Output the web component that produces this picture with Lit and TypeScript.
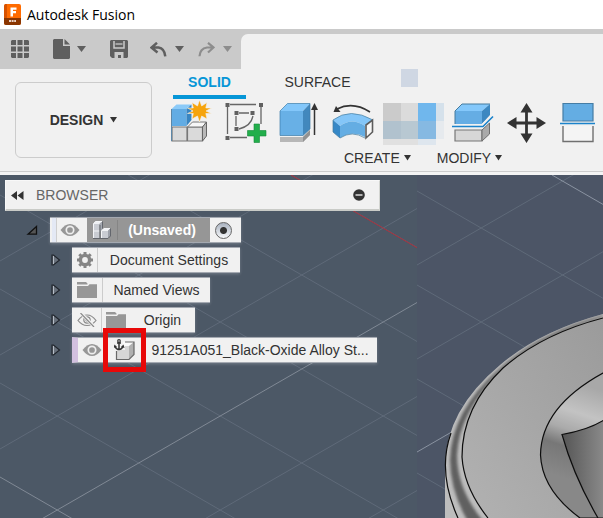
import { LitElement, html, css, svg, nothing } from "lit";
import { customElement, property } from "lit/decorators.js";

const icons: Record<string, unknown> = {
  logo: svg`<svg width="17" height="21" viewBox="0 0 17 21"><rect width="17" height="21" rx="2" fill="#ff6b00"/><path d="M1 0h2v14H0V2z" fill="#d75200"/><path d="M0 14h17v5a2 2 0 0 1-2 2H2a2 2 0 0 1-2-2z" fill="#8a3500"/><path d="M6.500 3.500h6v2.200H9V7h3v2.200H9v3.300H6.500z" fill="#fff"/><path d="M5 17h7" stroke="#e9d2c4" stroke-width="2" stroke-dasharray="2 .6"/></svg>`,
  grid: svg`<svg width="18" height="18" viewBox="0 0 18 18" fill="#5f5f5f"><path d="M1 0h4v5H0V1zM6.500 0h5v5h-5zM13 0h4l1 1v4h-5zM0 6.500h5v5H0zM6.500 6.500h5v5h-5zM13 6.500h5v5h-5zM0 13h5v5H1l-1-1zM6.500 13h5v5h-5zM13 13h5v4l-1 1h-4z"/></svg>`,
  file: svg`<svg width="17" height="20" viewBox="0 0 17 20" fill="#5f5f5f"><path d="M1 0h9v7h7v12l-1 1H1l-1-1V1z"/><path d="M11.500 0L17 5.500h-5.500z"/></svg>`,
  save: svg`<svg width="18" height="18" viewBox="0 0 18 18"><path d="M1 0h16l1 1v16l-1 1H2l-2-2V1z" fill="#5f5f5f"/><path d="M4 1v7h10V1" fill="none" stroke="#cacaca" stroke-width="1.500"/><path d="M5.500 4h7" stroke="#cacaca" stroke-width="1.300"/><path d="M4.500 18v-6h9v6h-2.500v-3H8v3z" fill="#cacaca"/></svg>`,
  undo: svg`<svg width="17" height="15" viewBox="0 0 17 15" fill="none" stroke="#5f5f5f" stroke-width="2.500"><path d="M7 .8L1.500 5.500l6 5M2 5.500h6.500q6 1 6.800 8.800"/></svg>`,
  redo: svg`<svg width="17" height="15" viewBox="0 0 17 15" fill="none" stroke="#8d8d8d" stroke-width="2.200"><path d="M10 .8l5.500 4.700-5.500 5M15 5.500H9Q2 6.500 1.500 14.300"/></svg>`,
  component: svg`<svg width="45" height="42" viewBox="0 0 45 42"><path d="M2 24h15v14H2zM17.500 24h15v14h-15z" fill="#dadada" stroke="#777" stroke-width="1.200"/><path d="M17.500 24l5-5h14l-4 5z" fill="#f7f7f7" stroke="#777"/><path d="M32.500 24l4-5v14l-4 5z" fill="#b9b9b9" stroke="#666"/><path d="M1.500 6h15v17h-15z" fill="#62ace4"/><path d="M1.500 6l5-4.500h15L16.500 6z" fill="#8bcaf8"/><path d="M16.500 6l5-4.500V17l-5 6z" fill="#3885c2"/><path d="M1.500 6v32" stroke="#5c87a8"/><path d="M31-4l2.200 6 5.300-3.500-1.200 5.500H43L37.500 7l5.500 2.500h-5.700l1.200 5.500-5.300-3L31 18l-2-6-5.500 3 1.300-5.500H19L24.500 7 19 4h5.800l-1.300-5.500L29 2z" transform="translate(-1.500 1)" fill="#f6a40c" stroke="#f1f1f1" stroke-width=".6"/></svg>`,
  sketch: svg`<svg width="45" height="42" viewBox="0 0 45 42"><g fill="none" stroke="#666" stroke-width="1.300"><path d="M6 1.500h26M3.500 4v27M6 34.500h17M37 4v17M15 10h10M12 13v10M15 26q12-3 14-13"/></g><path d="M1.500 0h4v4h-4zM35 0h4v4h-4zM1.500 33h4v4h-4zM10.500 8h4v4h-4zM26.500 8h4v4h-4zM10.500 24h4v4h-4z" fill="#606060"/><path d="M30 21h5.500v6.500H42V33h-6.500v6.500H30V33h-6.500v-5.500H30z" fill="#22ae4b" stroke="#14893a" stroke-width=".6"/></svg>`,
  extrude: svg`<svg width="45" height="42" viewBox="0 0 45 42"><path d="M2 34h23l7-7v5l-7 7H2z" fill="#b7b7b7"/><path d="M25 34l7-7v5l-7 7z" fill="#929292"/><path d="M2 8h23v24.500H2z" fill="#68b0e6"/><path d="M2 8l7.500-7.500H32L25 8z" fill="#83c7fa"/><path d="M25 8l7-7.500V26l-7 6.500z" fill="#4288bd"/><path d="M2 8v24.500h23l7-6.500V.5H9.500z" fill="none" stroke="#3e7da9" stroke-width=".7"/><path d="M36.500 6v26" stroke="#333" stroke-width="1.500"/><path d="M36.500 0l3.500 7h-7z" fill="#333"/></svg>`,
  revolve: svg`<svg width="42" height="42" viewBox="0 0 42 42"><path d="M1 17Q18 4 41 17l-8 6Q20 14 8 23z" fill="#84c6f8"/><path d="M1 17l7 6v12L1 29z" fill="#3688c7"/><path d="M8 23q12-9 25 0v11q-13-7-25 1z" fill="#64ade3"/><path d="M1 17Q18 4 41 17M1 17v12l7 6q12-8 25 0" fill="none" stroke="#447b9e" stroke-width=".7"/><path d="M34 22l6.500-5v12L34 35z" fill="#f7f7f7" stroke="#5c5c5c" stroke-width="1.600"/><path d="M5 6Q21-2 38 9" fill="none" stroke="#333" stroke-width="1.500"/><path d="M1.500 9L4 3l4.500 6z" fill="#333"/></svg>`,
  mosaic: svg`<svg width="60" height="42" viewBox="0 0 60 42"><path d="M0 0h18v18H0z" fill="#cbcbcb"/><path d="M18 0h17v18H18z" fill="#dbdbdb"/><path d="M35 0h18v18H35z" fill="#70b7ed"/><path d="M53 0h8v18h-8z" fill="#d5e1eb"/><path d="M0 18h18v18H0z" fill="#b1c2ce"/><path d="M18 18h17v18H18z" fill="#b8c8d2"/><path d="M35 18h18v18H35z" fill="#86b9e2"/><path d="M53 18h8v18h-8z" fill="#e6eaee"/><path d="M0 36h35v6H0z" fill="#e0e0e0"/><path d="M35 36h18v6H35z" fill="#dee6ee"/></svg>`,
  press: svg`<svg width="45" height="42" viewBox="0 0 45 42"><path d="M3 8h27v13H3z" fill="#65ade4"/><path d="M3 8l7-7h28l-8 7z" fill="#84c8fb"/><path d="M30 8l8-7v11l-8 9z" fill="#3d88c1"/><path d="M3 8v13M3 8l7-7h28" fill="none" stroke="#447b9e"/><path d="M3 27h27v11H3z" fill="#d7d7d7" stroke="#777" stroke-width="1.200"/><path d="M30 27l7.500-7v11L30 38z" fill="#aaa" stroke="#6e6e6e"/><path d="M0 23.500h30l10-10" fill="none" stroke="#f1f1f1" stroke-width="4"/><path d="M0 23.500h31l10-10" fill="none" stroke="#1b83cb" stroke-width="1.600"/></svg>`,
  move: svg`<svg width="45" height="42" viewBox="0 0 45 42"><path d="M20.500 5v30M6 20h29" stroke="#333" stroke-width="2.800"/><path d="M20.500 0l6 9.500h-12zM20.500 40l6-9.500h-12zM1 20l9.500-6v12zM40 20l-9.500-6v12z" fill="#333"/></svg>`,
  split: svg`<svg width="45" height="42" viewBox="0 0 45 42"><path d="M3 .5h30V18H3z" fill="#64ade3" stroke="#457da5" stroke-width="1.200"/><path d="M3 23v15.500h30V23" fill="#f4f4f4" stroke="#707070" stroke-width="1.400"/><path d="M0 20.500h35" stroke="#1b83cb" stroke-width="1.600"/></svg>`,
  rewind: svg`<svg width="13" height="9" viewBox="0 0 13 9" fill="#333"><path d="M6 0v9L0 4.500zM12.500 0v9l-6-4.500z"/></svg>`,
  minus: svg`<svg width="12" height="12" viewBox="0 0 12 12"><circle cx="6" cy="6" r="5.800" fill="#333"/><path d="M2.500 6h7" stroke="#ddd" stroke-width="1.500"/></svg>`,
  open: svg`<svg width="12" height="12" viewBox="0 0 12 12"><path d="M2 10.200L10.500 2.500v7.700z" fill="#555" stroke="#111" stroke-width="1.300"/></svg>`,
  closed: svg`<svg width="12" height="12" viewBox="0 0 12 12"><path d="M3 1v10h1.500L10.500 6l-6-5z" fill="#6a727d" stroke="#20252c" stroke-width="1.200"/><path d="M4.500 2v8" stroke="#b5bcc5"/></svg>`,
  eye: svg`<svg width="20" height="14" viewBox="0 0 20 14"><path d="M.5 7Q5 1 10 1t9.500 6Q15 13 10 13T.5 7z" fill="#979797"/><circle cx="10" cy="7" r="3.700" fill="none" stroke="#eee" stroke-width="1.700"/></svg>`,
  hidden: svg`<svg width="20" height="14" viewBox="0 0 20 14" fill="none" stroke="#8a8a8a" stroke-width="1.200"><path d="M1 7.500Q5 2 10 2t9 5.500Q15 12.500 10 12.500T1 7.500z"/><circle cx="10" cy="7" r="3.200"/><circle cx="10" cy="7" r="1"/><path d="M4 0l13 13.500" stroke="#f1f1f1" stroke-width="3"/><path d="M3.500 0L17 14"/></svg>`,
  gear: svg`<svg width="18" height="18" viewBox="0 0 18 18"><path d="M9 1v16M1 9h16M3.300 3.300l11.400 11.400M14.700 3.300L3.300 14.700" stroke="#858585" stroke-width="3"/><circle cx="9" cy="9" r="4.600" fill="#f1f1f1" stroke="#858585" stroke-width="3.400"/></svg>`,
  folder: svg`<svg width="22" height="18" viewBox="0 0 22 18" fill="#979797"><path d="M1 1h9l1.500 1.500v1H1zM1 5h11l1.500-1.800H21V17H1z"/></svg>`,
  assembly: svg`<svg width="20" height="20" viewBox="0 0 20 20"><path d="M1 4h6.500v14.500H1z" fill="#c9ccd3"/><path d="M1 4l2-2.500h7L7.500 4z" fill="#eef0f4"/><path d="M7.500 4L10 1.500V10l-2.500 2z" fill="#a4a8b0"/><path d="M9 11h7v7.500H9z" fill="#c9ccd3"/><path d="M9 11l2.500-2.500H18L16 11z" fill="#f2f3f6"/><path d="M16 11l2-2.500V16l-2 2.500z" fill="#9da1aa"/><path d="M1.500 18V4L3.500 1.500H10M1.500 11h6M9.500 18v-7L12 8.500h6" fill="none" stroke="#f4f5f8"/><path d="M1 18.500h15l2.500-2.500V8.500M10.500 1.500v7M8 5v13" fill="none" stroke="#63666d"/></svg>`,
  anchored: svg`<svg width="22" height="22" viewBox="0 0 22 22"><path d="M3 7h12v13H3z" fill="#d6d6d6"/><path d="M3 7l4-4h13l-5 4z" fill="#fafafa"/><path d="M15 7l5-4v12l-5 5z" fill="#b0b0b0"/><path d="M2.500 12v8.500H15l5-5V3H11" fill="none" stroke="#686868" stroke-width="1.200"/><path d="M0 0h9v6l2 1v4H0z" fill="#f1f1f1"/><path d="M5 3v8M3 4h4M1 7q1 3.500 4 3.500t4-3.500" fill="none" stroke="#333" stroke-width="1.500"/><circle cx="5" cy="2" r="1.300" fill="none" stroke="#333" stroke-width="1.200"/><path d="M-.5 9L.5 5.500 3 8zM10.500 9l-1-3.500L7 8z" fill="#333"/></svg>`,
};

const caret = (color: string) =>
  svg`<svg width="9" height="6" viewBox="0 0 9 6"><path d="M0 0h9L4.500 6z" fill=${color}/></svg>`;
const smallCaret = svg`<svg width="7" height="6" viewBox="0 0 7 6"><path d="M0 0h7L3.500 5.500z" fill="#333"/></svg>`;

interface TreeNode {
  label: string;
  icon: string;
  eye?: "eye" | "hidden";
  kind: string;
}

const nodes: TreeNode[] = [
  { label: "Document Settings", icon: "gear", kind: "settings" },
  { label: "Named Views", icon: "folder", kind: "views" },
  { label: "Origin", icon: "folder", eye: "hidden", kind: "origin" },
  { label: "91251A051_Black-Oxide Alloy St...", icon: "anchored", eye: "eye", kind: "part" },
];

const SLOPE = 0.5767;
/* One grid line between two x values, starting at height y; dir is 1 for falling, -1 for rising. */
const gridLine = (x1: number, x2: number, y: number, dir: number, stroke = "#5f6a79") =>
  svg`<line x1=${x1} x2=${x2} y1=${y} y2=${y + dir * SLOPE * (x2 - x1)} stroke=${stroke} stroke-width="1"/>`;

@customElement("model-canvas")
class ModelCanvas extends LitElement {
  static styles = css`
    :host { display: block; }
    .scene { display: block; width: 100%; height: 100%; }
  `;
  render() {
    const falling = [101, 195, 289, 383, 7, -87].map((y) => gridLine(0, 417, y, 1));
    const rising = [261, 355, 449, 637, 731].map((y) => gridLine(0, 417, y, -1));
    return html`<svg class="scene" viewBox="0 175 603 343" preserveAspectRatio="xMinYMin slice" aria-hidden="true">
      <defs>
        <linearGradient id="face" x1="0" y1="1" x2="1" y2="0"><stop offset="0" stop-color="#b2b2b2"/><stop offset="1" stop-color="#9b9b9b"/></linearGradient>
        <linearGradient id="hex" x1="0" y1="0" x2="1" y2="0"><stop offset="0" stop-color="#555"/><stop offset="1" stop-color="#8a8a8a"/></linearGradient>
        <linearGradient id="bore" gradientUnits="userSpaceOnUse" x1="585" y1="385" x2="555" y2="475"><stop offset="0" stop-color="#a8a8a8"/><stop offset=".3" stop-color="#c3c3c3"/><stop offset=".5" stop-color="#aaa"/><stop offset=".68" stop-color="#777"/><stop offset="1" stop-color="#888"/></linearGradient>
        <filter id="soft" x="-10%" y="-10%" width="120%" height="120%"><feGaussianBlur stdDeviation="1.500"/></filter>
        <clipPath id="body"><path d="M603 314Q540 331 500 365Q446 410 445 465V518H603z"/></clipPath>
      </defs>
      <path d="M0 175h417v343H0z" fill="#4c5866"/>
      <path d="M417 175h186v343H417z" fill="#4c5566"/>
      ${falling}${rising}
      ${gridLine(0, 417, 477, 1, "#808995")}
      ${gridLine(0, 417, 543, -1, "#808995")}
      ${gridLine(291, 417, 175, 1, "#a92f3b")}
      ${[191, 285, 379, 473].map((y) => gridLine(417, 603, y, 1))}
      ${[265, 359].map((y) => gridLine(417, 603, y, -1))}
      ${gridLine(552, 603, 175, 1, "#8a93a1")}
      ${gridLine(417, 460, 452, -1, "#8a93a1")}
      <g clip-path="url(#body)">
        <path d="M440 310h163v208H440z" fill="#bdbdbd"/>
        <path d="M603 315Q540 332 500 368Q451 411 450 460Q450 490 468 522H484Q457 490 457 455Q459 412 502 369Q540 336 603 317z" fill="#606060" filter="url(#soft)"/>
        <path d="M603 318Q542 334 503 368Q462 407 462 457Q464 488 488 518H603z" fill="url(#face)"/>
      </g>
      <g fill="none" stroke="#0d0d0d" stroke-width="1.200">
        <path d="M603 318Q542 334 503 368Q462 407 462 457Q464 488 488 518"/>
        <path d="M451 433Q437 472 458 518"/>
        <path d="M603 373Q541 407 540.500 455Q542 490 580 518H620V373z" fill="url(#bore)"/>
        <path d="M562 434.500Q588 430 604 420V518H598Q574 477 562 434.500z" fill="url(#hex)"/>
      </g>
    </svg>`;
  }
}

@customElement("browser-tree")
class BrowserTree extends LitElement {
  static styles = css`
    :host { display: block; }
    button { border: 0; padding: 0; background: none; display: grid; place-items: center; font: inherit; color: inherit; }
    .head {
      display: flex; align-items: center; box-sizing: border-box; width: 375px; max-width: 100%; height: 31px;
      padding: 0 14px 0 5px; background: #f1f1f1; border: 1px solid #f8f8f8; border-bottom: 2px solid #c9cbc7; border-right: 1px solid #d3d5d1;
      color: #666; font-size: 14px;
    }
    .title { flex: 1; margin: 0 0 0 12px; font: inherit; }
    .rows { display: grid; gap: 4px; margin: 6px 0 0; padding: 0; list-style: none; justify-items: start; }
    .row { display: flex; align-items: center; height: 26px; color: #333; }
    .twist { width: 12px; height: 12px; }
    .bar {
      display: flex; align-items: stretch; box-sizing: border-box; height: 26px; background: #f1f1f1; border: solid #a4a9b1; border-width: 1px 0;
      box-shadow: 0 1px 3px #ffffff38;
    }
    .root { padding-left: 21px; }
    .root .bar { margin-left: 12px; width: 191px; }
    .child { padding-left: 44px; }
    .child .bar { margin-left: 11px; }
    .edge { width: 4px; margin: 0 0 0 2px; border-right: 1px solid #cfcfcf; background: #e4e9f5; }
    .eye { width: 26px; margin: 0 4px 0 0; }
    .active { flex: 1; display: flex; align-items: center; background: #969696; color: #fff; font-weight: 700; }
    .active .pic { width: 30px; border-right: 1px solid #858585; }
    .active .label { flex: 1; padding-right: 4px; text-align: center; }
    .pic { display: grid; place-items: center; }
    .on {
      appearance: none; align-self: center; width: 17px; height: 17px; margin: 0 9px 0 5px; border: 1px solid #666; border-radius: 50%;
      background: radial-gradient(circle, #333 0 3px, transparent 4px), linear-gradient(#a9b2c0, #f6f8fa);
    }
    .label { align-self: center; text-align: center; white-space: nowrap; font-size: 14px; }
    .settings .pic { width: 25px; border-right: 1px solid #ccc; }
    .settings .label { width: 142px; }
    .views .pic { width: 30px; border-right: 1px solid #ccc; }
    .views .label { width: 107px; }
    .origin .eye, .part .eye { margin: 0; }
    .origin .eye { width: 30px; border-right: 1px solid #ccc; }
    .origin .pic { width: 28px; }
    .origin .label { width: 65px; }
    .part .bar { border-left: 6px solid #d2c0df; }
    .part .eye { width: 28px; }
    .part .pic { position: relative; width: 37px; }
    .part .label { width: 234px; }
    .mark { position: absolute; inset: -10px -3px; border: 5px solid #e80808; pointer-events: none; }
  `;
  render() {
    return html`
      <header class="head">
        <button aria-label="Collapse panel">${icons.rewind}</button>
        <h2 class="title">BROWSER</h2>
        <button aria-label="Minimize">${icons.minus}</button>
      </header>
      <ul class="rows">
        <li class="row root">
          <button class="twist" aria-label="Collapse">${icons.open}</button>
          <div class="bar">
            <span class="edge"></span>
            <button class="eye" aria-label="Toggle visibility">${icons.eye}</button>
            <div class="active"><span class="pic">${icons.assembly}</span><label class="label" for="active">(Unsaved)</label></div>
            <input class="on" id="active" type="radio" name="active" checked />
          </div>
        </li>
        ${nodes.map(
          (n) => html`<li class="row child ${n.kind}">
            <button class="twist" aria-label="Expand ${n.label}">${icons.closed}</button>
            <div class="bar">
              ${n.eye ? html`<button class="eye" aria-label="Toggle visibility">${icons[n.eye]}</button>` : nothing}
              <span class="pic">${icons[n.icon]}${n.kind === "part" ? html`<span class="mark"></span>` : nothing}</span>
              <span class="label">${n.label}</span>
            </div>
          </li>`
        )}
      </ul>`;
  }
}

@customElement("tool-ribbon")
class ToolRibbon extends LitElement {
  static styles = css`
    :host { display: flex; box-sizing: border-box; height: 106px; padding: 0 0 0 15px; overflow: hidden; background: linear-gradient(#f1f1f1, #f1f1f1) 0 0 / 100% 102px no-repeat, linear-gradient(#ccc, #ccc) 0 102px / 100% 1px no-repeat, #f4f4f4; }
    button { border: 0; padding: 0; background: none; font: inherit; color: #333; white-space: nowrap; }
    svg { display: block; overflow: visible; }
    .space {
      display: flex; flex: none; align-items: center; justify-content: center; gap: 7px; box-sizing: border-box; width: 137px; height: 76px;
      margin-top: 13px; border: 1px solid #ccc; border-radius: 6px; font-size: 14px; font-weight: 700;
    }
    .main { flex: none; margin-left: 21px; font-size: 14px; }
    .tabs { display: flex; height: 30px; }
    .tab { width: 73px; height: 30px; box-sizing: border-box; border-bottom: 4px solid transparent; }
    .tab.on { border-color: #0696d7; color: #0696d7; font-weight: 700; }
    .tab + .tab { margin-left: 35px; }
    .blot { width: 17px; height: 18px; margin-left: 47px; background: #cfd7e3; }
    .tools { display: flex; gap: 9px; margin: 4px 0 0 -3px; }
    .menus { display: flex; gap: 26px; margin: 4px 0 0 171px; }
    .menu { display: flex; align-items: center; gap: 4px; height: 18px; }
  `;
  render() {
    const tools = ["component", "sketch", "extrude", "revolve", "mosaic", "press", "move", "split"];
    return html`
      <button class="space">DESIGN ${smallCaret}</button>
      <div class="main">
        <nav class="tabs">
          <button class="tab on">SOLID</button><button class="tab">SURFACE</button><span class="blot"></span>
        </nav>
        <div class="tools">${tools.map((t) => html`<button aria-label=${t}>${icons[t]}</button>`)}</div>
        <div class="menus">
          <button class="menu">CREATE ${smallCaret}</button>
          <button class="menu">MODIFY ${smallCaret}</button>
        </div>
      </div>`;
  }
}

@customElement("app-root")
class AppRoot extends LitElement {
  @property() heading = "Autodesk Fusion";
  static styles = css`
    :host { display: flex; flex-direction: column; min-height: 100vh; overflow: hidden; background: #f1f1f1; font-family: "Liberation Sans", Arial, sans-serif; }
    svg { display: block; }
    button { display: block; border: 0; padding: 0; background: none; }
    .titlebar { display: flex; align-items: center; gap: 6px; height: 29px; padding-left: 4px; background: #fff; color: #000; }
    .name { margin: 0; font: 400 14px/20px "Open Sans", "Noto Sans", sans-serif; }
    .quick { display: flex; height: 40px; background: #cacaca; }
    .actions { display: flex; align-items: center; box-sizing: border-box; width: 241px; padding-left: 11px; }
    .pair { display: flex; align-items: center; }
    .gap-s { gap: 7px; }
    .gap-m { gap: 8px; }
    .file, .save { margin-left: 24px; }
    .undo { margin-left: 22px; }
    .redo { margin-left: 14px; }
    .sheet { flex: 1; margin-top: 5px; border-top-left-radius: 7px; background: #f1f1f1; }
    .view { position: relative; flex: 1; min-height: 343px; }
    .canvas { position: absolute; inset: 0; }
    .tree { position: relative; padding: 5px 5px 0; }
  `;
  render() {
    return html`
      <header class="titlebar">${icons.logo}<h1 class="name">${this.heading}</h1></header>
      <div class="quick">
        <div class="actions">
          <button aria-label="Data panel">${icons.grid}</button>
          <button class="pair gap-s file" aria-label="File">${icons.file}${caret("#5f5f5f")}</button>
          <button class="save" aria-label="Save">${icons.save}</button>
          <button class="pair gap-m undo" aria-label="Undo">${icons.undo}${caret("#5f5f5f")}</button>
          <button class="pair gap-m redo" aria-label="Redo">${icons.redo}${caret("#8d8d8d")}</button>
        </div>
        <div class="sheet"></div>
      </div>
      <tool-ribbon></tool-ribbon>
      <main class="view">
        <model-canvas class="canvas"></model-canvas>
        <browser-tree class="tree"></browser-tree>
      </main>`;
  }
}
